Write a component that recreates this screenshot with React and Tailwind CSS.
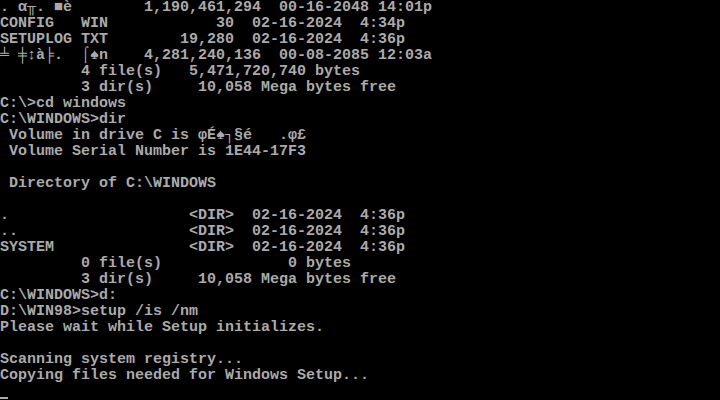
import React from "react";

const lines = [
  ". α╥. ■è        1,190,461,294  00-16-2048 14:01p",
  "CONFIG   WIN            30  02-16-2024  4:34p",
  "SETUPLOG TXT        19,280  02-16-2024  4:36p",
  "╧ ╪↕à╞.  ⌠♠n    4,281,240,136  00-08-2085 12:03a",
  "         4 file(s)   5,471,720,740 bytes",
  "         3 dir(s)     10,058 Mega bytes free",
  "C:\\>cd windows",
  "C:\\WINDOWS>dir",
  " Volume in drive C is φÉ♠┐§é   .φ£",
  " Volume Serial Number is 1E44-17F3",
  "",
  " Directory of C:\\WINDOWS",
  "",
  ".                    <DIR>  02-16-2024  4:36p",
  "..                   <DIR>  02-16-2024  4:36p",
  "SYSTEM               <DIR>  02-16-2024  4:36p",
  "         0 file(s)              0 bytes",
  "         3 dir(s)     10,058 Mega bytes free",
  "C:\\WINDOWS>d:",
  "D:\\WIN98>setup /is /nm",
  "Please wait while Setup initializes.",
  "",
  "Scanning system registry...",
  "Copying files needed for Windows Setup...",
];

const App = () => {
  return (
    <div className="w-[720px] h-[400px] bg-black overflow-hidden text-[#aaaaaa] font-['Liberation_Mono','DejaVu_Sans_Mono',monospace] text-[15px] leading-4 font-bold">
      {lines.map((line, i) => (
        <div key={i} className="h-4 whitespace-pre">
          {line}
        </div>
      ))}
      <div className="h-4">
        <div className="mt-[13px] h-[2px] w-2 bg-[#aaaaaa]" />
      </div>
    </div>
  );
};

export default App;
